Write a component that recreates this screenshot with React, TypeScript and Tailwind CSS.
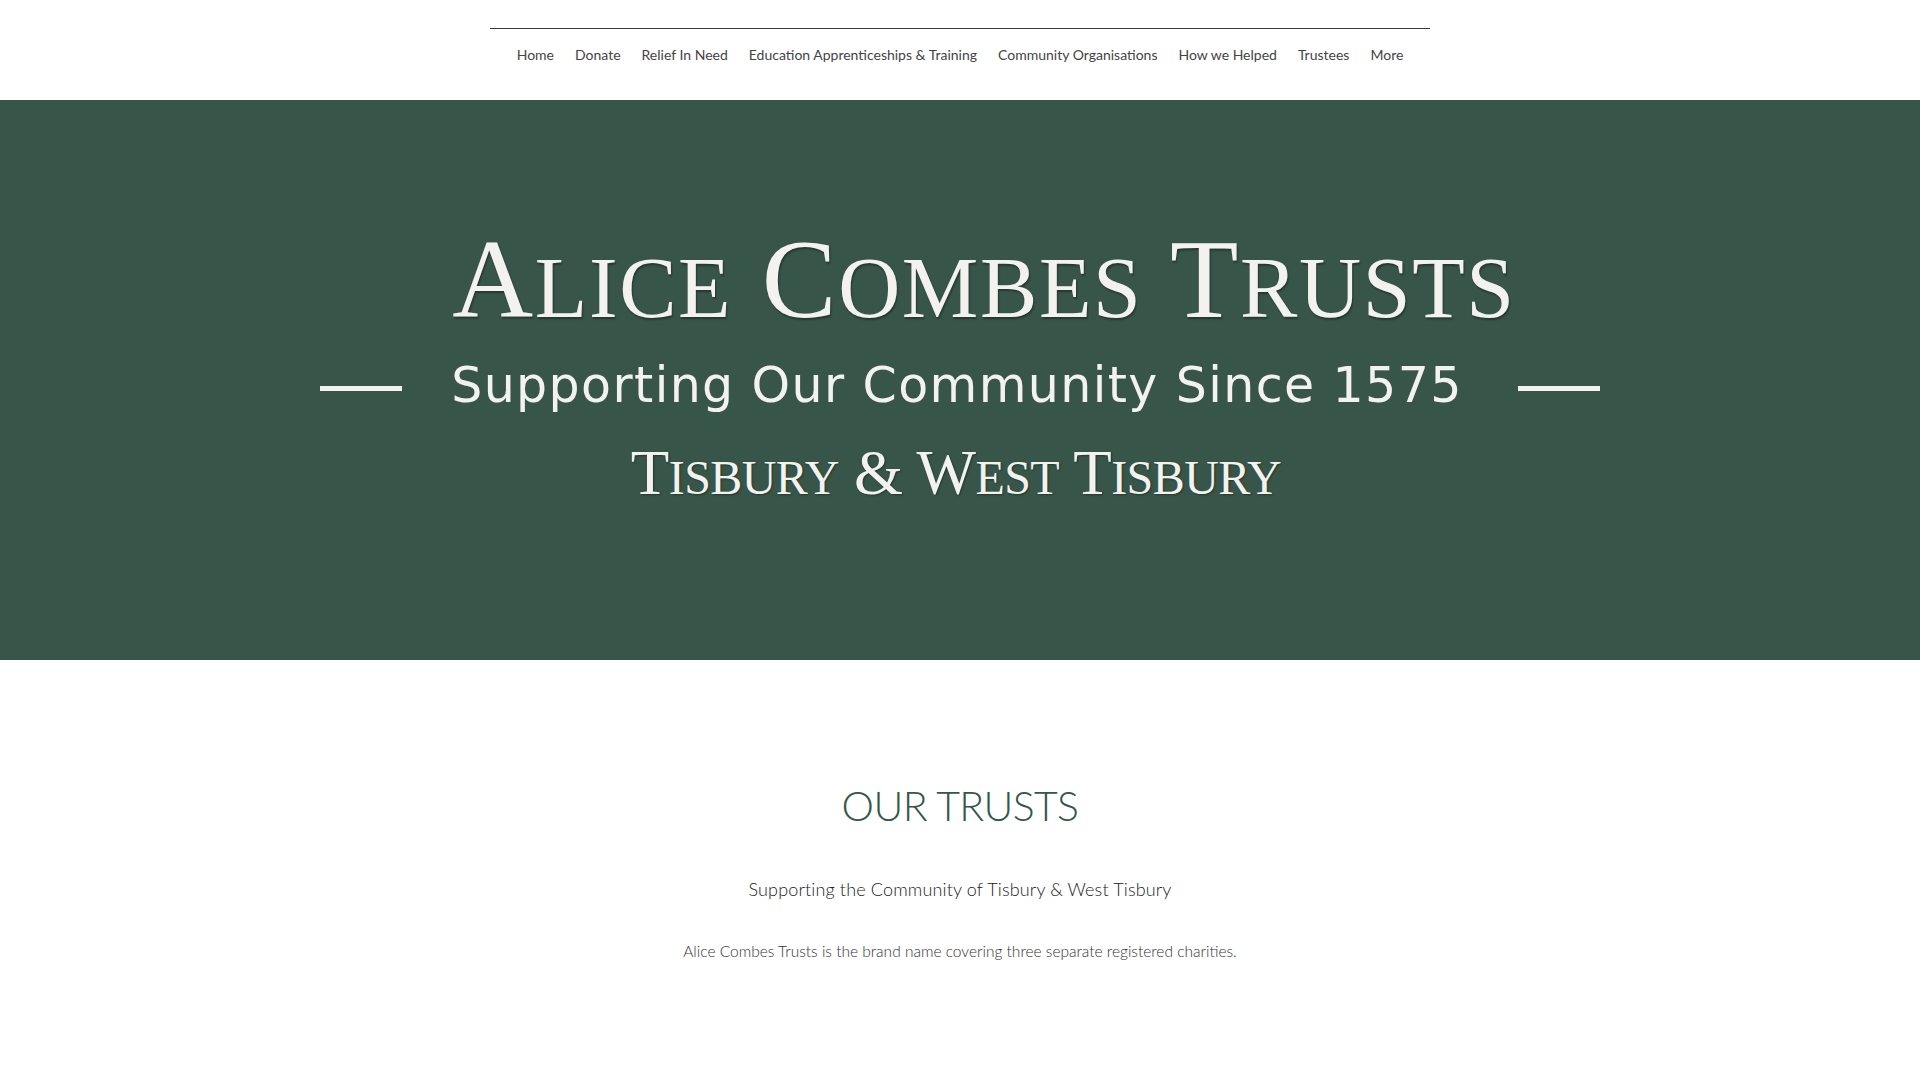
const navItems = [
  "Home",
  "Donate",
  "Relief In Need",
  "Education Apprenticeships & Training",
  "Community Organisations",
  "How we Helped",
  "Trustees",
  "More",
];

// big first letter + small caps rest, like the hero artwork
function SmallCaps({ words, big, small }: { words: string[]; big: string; small: string }) {
  return (
    <>
      {words.map((w, i) => (
        <span key={i}>
          {i > 0 && " "}
          <span className={big}>{w[0]}</span>
          <span className={small}>{w.slice(1).toUpperCase()}</span>
        </span>
      ))}
    </>
  );
}

export default function App() {
  return (
    <div className="min-h-screen bg-white font-['Lato',sans-serif]">
      {/* Header */}
      <header className="h-[100px] pt-[28px]">
        <div className="mx-auto w-[940px] border-t border-[#3a3a3a]" />
        <nav className="mt-[19px] flex justify-center gap-[21px] text-[14px] leading-none text-[#444]">
          {navItems.map((item) => (
            <a key={item} href="#" className="whitespace-nowrap">
              {item}
            </a>
          ))}
        </nav>
      </header>

      {/* Hero */}
      <section className="h-[560px] bg-[#375549] pt-[123px] text-[#f3f2ee] font-['Liberation_Serif',serif]">
        <h1 className="pl-[48px] text-center text-[112px] leading-none tracking-[1.6px] whitespace-nowrap [text-shadow:1px_2px_2px_rgba(0,0,0,0.35)]">
          <SmallCaps words={["Alice", "Combes", "Trusts"]} big="text-[112px]" small="text-[86px]" />
        </h1>

        <div className="mt-[26px] flex items-center justify-center gap-[52px]">
          <div className="h-[5px] w-[82px] translate-y-[3px] bg-[#f3f2ee]" />
          <p className="-translate-x-[3px] font-['DejaVu_Sans',sans-serif] text-[49px] leading-none tracking-[1.4px] whitespace-nowrap">
            Supporting Our Community Since 1575
          </p>
          <div className="h-[5px] w-[82px] translate-y-[3px] bg-[#f3f2ee]" />
        </div>

        <h2 className="mt-[32px] pr-[8px] text-center text-[63px] leading-none tracking-[-0.55px] whitespace-nowrap [text-shadow:1px_1px_2px_rgba(0,0,0,0.35)]">
          <SmallCaps words={["Tisbury", "&", "West", "Tisbury"]} big="text-[63px]" small="text-[48px]" />
        </h2>
      </section>

      {/* Our trusts */}
      <section className="pt-[125px] pb-[120px] text-center">
        <h2 className="text-[41px] font-light leading-none tracking-[-0.6px] text-[#35574a]">OUR TRUSTS</h2>
        <p className="mt-[54px] text-[18px] font-light leading-none tracking-[0.15px] text-[#222]">
          Supporting the Community of Tisbury &amp; West Tisbury
        </p>
        <p className="mt-[46px] text-[15.5px] font-light leading-none text-[#333]">
          Alice Combes Trusts is the brand name covering three separate registered charities.
        </p>
      </section>
    </div>
  );
}
